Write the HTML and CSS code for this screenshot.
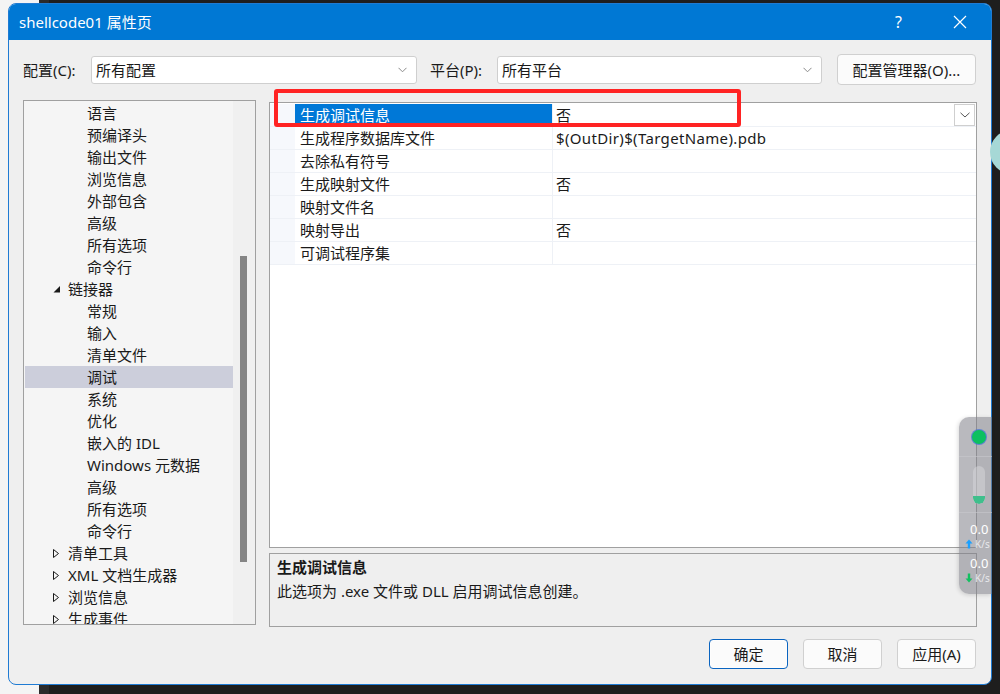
FILE: index.html
```html
<!DOCTYPE html>
<html lang="zh-CN">
<head>
<meta charset="utf-8">
<title>shellcode01 属性页</title>
<link rel="stylesheet" href="styles.css">
</head>
<body>
<div class="dialog">
  <div class="titlebar">
    <span class="title">shellcode01 属性页</span>
    <span class="tb-help">?</span>
    <span class="tb-close"><svg width="14" height="14" viewBox="0 0 14 14"><path d="M1 1L13 13M13 1L1 13" stroke="#fff" stroke-width="1.2" fill="none"/></svg></span>
  </div>
  <div class="body">
    <div class="toprow">
      <span class="lbl lbl1">配置(C):</span>
      <div class="combo combo1"><span>所有配置</span><svg class="chev" width="9" height="6" viewBox="0 0 9 6"><path d="M0.5 0.8L4.5 4.8L8.5 0.8" stroke="#8a8a8a" fill="none"/></svg></div>
      <span class="lbl lbl2">平台(P):</span>
      <div class="combo combo2"><span>所有平台</span><svg class="chev" width="9" height="6" viewBox="0 0 9 6"><path d="M0.5 0.8L4.5 4.8L8.5 0.8" stroke="#8a8a8a" fill="none"/></svg></div>
      <button class="btn cfgbtn">配置管理器(O)...</button>
    </div>
    <div class="main">
      <div class="tree">
        <div class="tree-list">
          <div class="ti l2">语言</div>
          <div class="ti l2">预编译头</div>
          <div class="ti l2">输出文件</div>
          <div class="ti l2">浏览信息</div>
          <div class="ti l2">外部包含</div>
          <div class="ti l2">高级</div>
          <div class="ti l2">所有选项</div>
          <div class="ti l2">命令行</div>
          <div class="ti l1"><svg class="tri" width="9" height="11" viewBox="0 0 9 11"><path d="M8 2L8 8.5L1.5 8.5Z" fill="#1a1a1a"/></svg>链接器</div>
          <div class="ti l2">常规</div>
          <div class="ti l2">输入</div>
          <div class="ti l2">清单文件</div>
          <div class="ti l2 sel">调试</div>
          <div class="ti l2">系统</div>
          <div class="ti l2">优化</div>
          <div class="ti l2">嵌入的 IDL</div>
          <div class="ti l2">Windows 元数据</div>
          <div class="ti l2">高级</div>
          <div class="ti l2">所有选项</div>
          <div class="ti l2">命令行</div>
          <div class="ti l1"><svg class="tri" width="9" height="11" viewBox="0 0 9 11"><path d="M1.5 1.5L6.5 5.5L1.5 9.5Z" stroke="#1a1a1a" fill="none"/></svg>清单工具</div>
          <div class="ti l1"><svg class="tri" width="9" height="11" viewBox="0 0 9 11"><path d="M1.5 1.5L6.5 5.5L1.5 9.5Z" stroke="#1a1a1a" fill="none"/></svg>XML 文档生成器</div>
          <div class="ti l1"><svg class="tri" width="9" height="11" viewBox="0 0 9 11"><path d="M1.5 1.5L6.5 5.5L1.5 9.5Z" stroke="#1a1a1a" fill="none"/></svg>浏览信息</div>
          <div class="ti l1"><svg class="tri" width="9" height="11" viewBox="0 0 9 11"><path d="M1.5 1.5L6.5 5.5L1.5 9.5Z" stroke="#1a1a1a" fill="none"/></svg>生成事件</div>
        </div>
        <div class="scrollbar"><div class="thumb"></div></div>
      </div>
      <div class="rightcol">
        <div class="grid">
          <div class="row"><div class="gut"></div><div class="name selname">生成调试信息</div><div class="val">否<span class="ddbtn"><svg width="10" height="6" viewBox="0 0 10 6"><path d="M0.5 0.8L5 5L9.5 0.8" stroke="#555" fill="none"/></svg></span></div></div>
          <div class="row"><div class="gut"></div><div class="name">生成程序数据库文件</div><div class="val latin">$(OutDir)$(TargetName).pdb</div></div>
          <div class="row"><div class="gut"></div><div class="name">去除私有符号</div><div class="val"></div></div>
          <div class="row"><div class="gut"></div><div class="name">生成映射文件</div><div class="val">否</div></div>
          <div class="row"><div class="gut"></div><div class="name">映射文件名</div><div class="val"></div></div>
          <div class="row"><div class="gut"></div><div class="name">映射导出</div><div class="val">否</div></div>
          <div class="row"><div class="gut"></div><div class="name">可调试程序集</div><div class="val"></div></div>
        </div>
        <div class="desc">
          <div class="desc-title">生成调试信息</div>
          <div class="desc-text">此选项为 .exe 文件或 DLL 启用调试信息创建。</div>
        </div>
      </div>
    </div>
    <div class="btnrow">
      <button class="btn dbtn default">确定</button>
      <button class="btn dbtn">取消</button>
      <button class="btn dbtn">应用(A)</button>
    </div>
  </div>
</div>

<div class="redbox"></div>
<div class="teal"></div>
<div class="widget">
  <div class="w-sec w-top"><span class="dot"></span></div>
  <div class="w-sec w-mid"><span class="pill"><span class="pill-fill"></span></span></div>
  <div class="w-sec w-speed">
    <div class="num">0.0</div>
    <div class="unit"><svg class="arr" width="8" height="10" viewBox="0 0 8 10"><path d="M4 0.5L7.5 4.5H5.2V9.5H2.8V4.5H0.5Z" fill="#1aa0ff"/></svg>K/s</div>
    <div class="num n2">0.0</div>
    <div class="unit"><svg class="arr" width="8" height="10" viewBox="0 0 8 10"><path d="M4 9.5L7.5 5.5H5.2V0.5H2.8V5.5H0.5Z" fill="#12c060"/></svg>K/s</div>
  </div>
</div>
</body>
</html>
```
FILE: styles.css
```css
* { box-sizing: border-box; }
html, body { margin: 0; padding: 0; }
body {
  width: 1000px;
  height: 694px;
  overflow: hidden;
  position: relative;
  background: linear-gradient(to right, #f4f4f4 0 39px, #2b2b2b 39px 49px, #1e1e1e 49px);
  font-family: "Noto Sans", "Noto Sans CJK SC", sans-serif;
  font-size: 15px;
  color: #1a1a1a;
}
.dialog {
  margin: 3px 0 0 8px;
  width: 984px;
  height: 682px;
  border: 1px solid #1f7bd3;
  border-radius: 8px;
  overflow: hidden;
  background: #efefef;
  display: flex;
  flex-direction: column;
}
.titlebar {
  height: 36px;
  flex: none;
  background: #0078d4;
  color: #fff;
  display: flex;
  align-items: center;
  padding-left: 10px;
}
.title { font-size: 15px; line-height: 20px; }
.tb-help { margin-left: auto; font-size: 16px; width: 14px; margin-right: 44px; }
.tb-close { width: 14px; height: 14px; margin-right: 24px; display: flex; }
.body {
  flex: 1;
  padding: 14px 14px 0 14px;
  display: flex;
  flex-direction: column;
}
.toprow {
  height: 31px;
  display: flex;
  align-items: center;
}
.lbl { line-height: 20px; }
.lbl1 { width: 68px; }
.lbl2 { width: 67px; margin-left: 13px; }
.combo {
  height: 28px;
  background: #fff;
  border: 1px solid #cfcfcf;
  border-radius: 3px;
  display: flex;
  align-items: center;
  padding: 0 9px 0 4px;
  line-height: 20px;
}
.combo1 { width: 326px; }
.combo2 { width: 325px; }
.chev { margin-left: auto; }
.btn {
  font-family: "Noto Sans", "Noto Sans CJK SC", sans-serif;
  font-size: 15px;
  color: #1a1a1a;
  background: #fbfbfb;
  border: 1px solid #d0d0d0;
  border-radius: 4px;
  padding: 0;
  line-height: 20px;
}
.cfgbtn { width: 139px; height: 31px; margin-left: 15px; }
.main {
  margin-top: 15px;
  height: 527px;
  display: flex;
  gap: 13px;
}
.tree {
  width: 233px;
  height: 525px;
  border: 1px solid #a0a0a0;
  background: #f5f5f5;
  display: flex;
  overflow: hidden;
}
.tree-list {
  width: 209px;
  padding-top: 1px;
  overflow: hidden;
}
.ti {
  height: 22px;
  line-height: 22px;
  white-space: nowrap;
  display: flex;
  align-items: center;
}
.l2 { padding-left: 63px; }
.l1 { padding-left: 28px; }
.tri { margin-right: 7px; }
.sel { background: #cccedb; margin-left: 1px; padding-left: 62px; }
.scrollbar {
  width: 22px;
  background: #f0f0f0;
  padding-top: 155px;
}
.thumb {
  width: 7px;
  height: 306px;
  margin-left: 7px;
  background: #858585;
}
.rightcol {
  width: 708px;
  display: flex;
  flex-direction: column;
}
.grid {
  margin-top: 2px;
  height: 446px;
  border: 1px solid #a0a0a0;
  background: #fff;
  padding-top: 1px;
}
.row {
  display: flex;
  height: 23px;
  border-bottom: 1px solid #eef1f6;
}
.gut { width: 25px; background: #f6f8fc; }
.name {
  width: 258px;
  padding-left: 5px;
  line-height: 22px;
  border-right: 1px solid #eef1f6;
  white-space: nowrap;
}
.selname { background: #0078d7; color: #fff; }
.val {
  flex: 1;
  padding-left: 3px;
  line-height: 22px;
  display: flex;
  white-space: nowrap;
}
.latin { letter-spacing: 0.35px; }
.ddbtn {
  margin-left: auto;
  margin-right: 1px;
  width: 21px;
  height: 22px;
  border: 1px solid #cfcfcf;
  background: #fff;
  display: flex;
  align-items: center;
  justify-content: center;
}
.desc {
  margin-top: 5px;
  height: 74px;
  border: 1px solid #a0a0a0;
  background: #efefef;
  padding: 3px 7px 0 7px;
}
.desc-title { font-weight: bold; line-height: 20px; }
.desc-text { margin-top: 4px; line-height: 20px; }
.btnrow {
  margin-top: 12px;
  height: 30px;
  display: flex;
  justify-content: flex-end;
  gap: 15px;
  padding-right: 1px;
}
.dbtn { width: 79px; height: 30px; }
.default { border: 1px solid #0a64c0; box-shadow: inset 0 0 0 1px #fdfdfd; }

/* annotation overlay */
.redbox {
  position: absolute;
  left: 274px;
  top: 89px;
  width: 467px;
  height: 38px;
  border: 4px solid #ff2323;
  border-radius: 3px;
}
.teal {
  position: absolute;
  left: 990px;
  top: 130px;
  width: 44px;
  height: 44px;
  border-radius: 50%;
  background: #a6d8d6;
}
.widget {
  position: absolute;
  left: 959px;
  top: 417px;
  width: 33px;
  height: 177px;
  border-radius: 10px 0 0 10px;
  background: rgba(128, 128, 136, 0.55);
  display: flex;
  flex-direction: column;
  box-shadow: -1px 1px 4px rgba(0,0,0,0.15);
}
.w-sec { display: flex; flex-direction: column; align-items: center; }
.w-top { height: 40px; justify-content: center; border-bottom: 1px solid rgba(200,200,205,0.6); }
.dot {
  width: 14px; height: 14px; border-radius: 50%;
  background: #0cc060;
  box-shadow: 0 0 0 1px rgba(60,110,220,0.7);
  margin-left: 6px;
}
.w-mid { height: 56px; justify-content: center; border-bottom: 1px solid rgba(200,200,205,0.6); }
.pill {
  width: 12px; height: 38px; border-radius: 6px;
  background: rgba(220,220,225,0.45);
  margin-left: 6px;
  display: flex; flex-direction: column; justify-content: flex-end;
  overflow: hidden;
}
.pill-fill { height: 8px; background: #3fbf8c; border-radius: 0 0 6px 6px; }
.w-speed { padding-top: 10px; align-items: flex-start; padding-left: 6px; }
.num { color: #fff; font-size: 13px; line-height: 13px; height: 13px; padding-left: 5px; }
.n2 { margin-top: 8px; }
.unit { color: #e8e8ec; font-size: 10px; line-height: 10px; height: 10px; margin-top: 3px; display: flex; align-items: center; }
.arr { margin-right: 2px; flex: none; }
```
